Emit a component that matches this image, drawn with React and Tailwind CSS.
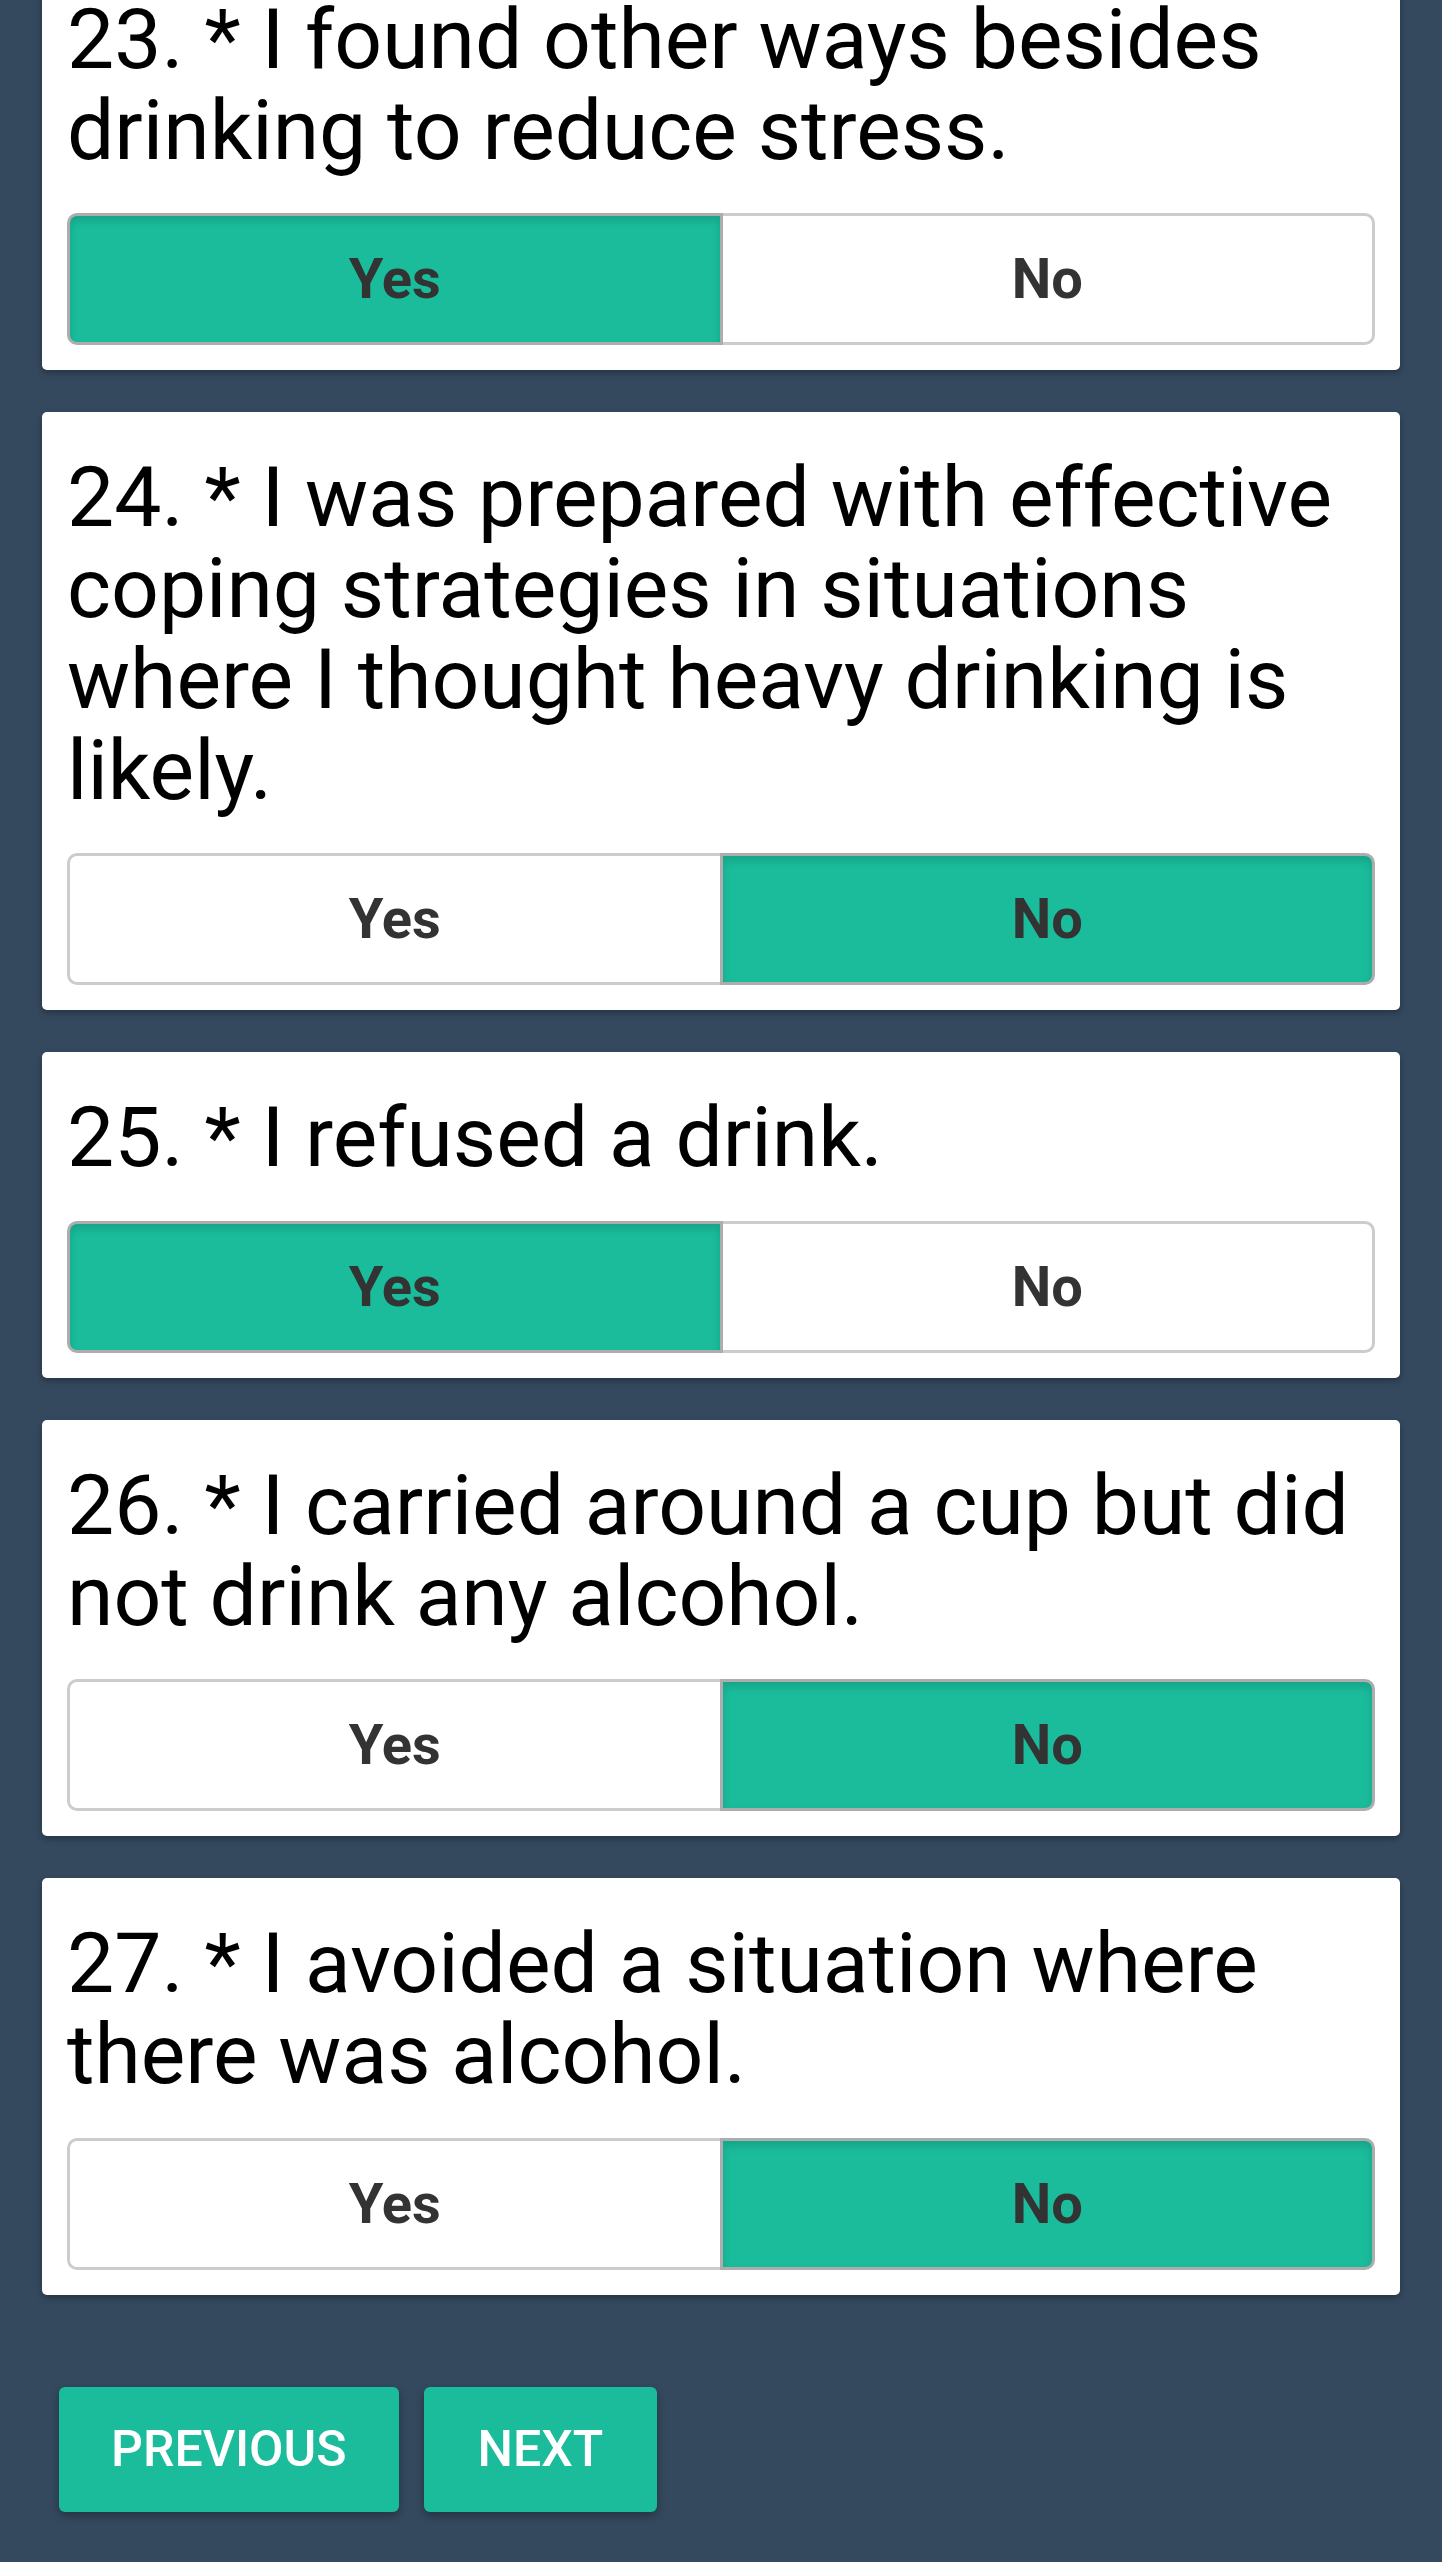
// Questionnaire page — yes/no cards with previous/next navigation
import React, { useState } from 'react';

const QUESTIONS = [
  { n: 23, text: 'I found other ways besides drinking to reduce stress.', answer: 'yes' },
  { n: 24, text: 'I was prepared with effective coping strategies in situations where I thought heavy drinking is likely.', answer: 'no' },
  { n: 25, text: 'I refused a drink.', answer: 'yes' },
  { n: 26, text: 'I carried around a cup but did not drink any alcohol.', answer: 'no' },
  { n: 27, text: 'I avoided a situation where there was alcohol.', answer: 'no' },
];

function Choice({ label, active, side, onClick }) {
  const base = 'flex-1 flex items-center justify-center border-[3px] text-[56px] font-bold text-[#333]';
  const shape = side === 'left' ? 'rounded-l-[10px]' : 'rounded-r-[10px] -ml-[3px]';
  const state = active
    ? 'relative z-10 bg-[#1abc9c] border-[#adadad] shadow-[inset_0_5px_8px_rgba(0,0,0,0.13)]'
    : 'bg-white border-[#cccccc]';
  return (
    <button onClick={onClick} className={`${base} ${shape} ${state}`}>
      {label}
    </button>
  );
}

function QuestionCard({ q, value, onChange }) {
  return (
    <div className="rounded-[5px] bg-white px-[25px] pt-[41px] pb-[25px] shadow-[0_3px_6px_rgba(0,0,0,0.3)]">
      <p className="text-[84px] leading-[90.7px] text-black">
        {q.n}. * {q.text}
      </p>
      <div className="mt-[37px] flex h-[132px]">
        <Choice label="Yes" side="left" active={value === 'yes'} onClick={() => onChange('yes')} />
        <Choice label="No" side="right" active={value === 'no'} onClick={() => onChange('no')} />
      </div>
    </div>
  );
}

export default function App() {
  const [answers, setAnswers] = useState(
    Object.fromEntries(QUESTIONS.map(q => [q.n, q.answer]))
  );

  const setAnswer = (n, v) => setAnswers(prev => ({ ...prev, [n]: v }));

  return (
    <div className="min-h-screen overflow-hidden bg-[#34495e] font-['Roboto','Liberation_Sans',sans-serif]">
      <div className="-mt-[46px] px-[42px]">
        <div className="flex flex-col gap-[42px]">
          {QUESTIONS.map(q => (
            <QuestionCard key={q.n} q={q} value={answers[q.n]} onChange={v => setAnswer(q.n, v)} />
          ))}
        </div>

        {/* Navigation */}
        <div className="mt-[92px] ml-[17px] flex gap-[25px]">
          <button className="h-[125px] rounded-[6px] bg-[#1abc9c] px-[52px] text-[50px] font-medium text-white shadow-[0_4px_8px_rgba(0,0,0,0.3)]">
            PREVIOUS
          </button>
          <button className="h-[125px] rounded-[6px] bg-[#1abc9c] px-[54px] text-[50px] font-medium text-white shadow-[0_4px_8px_rgba(0,0,0,0.3)]">
            NEXT
          </button>
        </div>
      </div>
    </div>
  );
}
